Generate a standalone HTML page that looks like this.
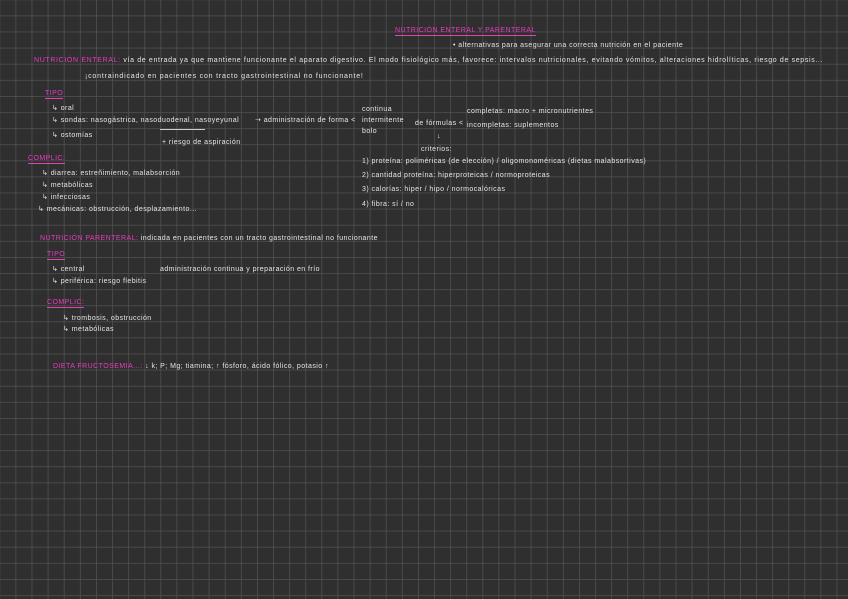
<!DOCTYPE html>
<html><head><meta charset="utf-8"><style>
html,body{margin:0;padding:0;}
body{width:848px;height:599px;background:#2f2f2f;position:relative;overflow:hidden;font-family:"Liberation Sans",sans-serif;}
svg.g{position:absolute;left:0;top:0}
.t{position:absolute;color:#e6e6e6;font-size:7px;white-space:nowrap;letter-spacing:0.45px;line-height:8px;}
.p{color:#e83cc0;}
.u{border-bottom:1px solid #e83cc0;}
</style></head><body>
<svg class="g" width="848" height="599"><defs><pattern id="gr" x="15.5" y="15.5" width="16.1" height="16.1" patternUnits="userSpaceOnUse"><path d="M0 0H16.1M0 0V16.1" stroke="#525252" stroke-width="1.5" fill="none"/></pattern></defs><rect width="848" height="599" fill="url(#gr)"/></svg>

<div class="t p u" style="left:395px;top:27px;">NUTRICIÓN ENTERAL Y PARENTERAL</div>
<div class="t" style="left:453px;top:42px;">• alternativas para asegurar una correcta nutrición en el paciente</div>
<div class="t" style="left:34px;top:57px;letter-spacing:0.65px;"><span class="p">NUTRICIÓN ENTERAL:</span> vía de entrada ya que mantiene funcionante el aparato digestivo. El modo fisiológico más, favorece: intervalos nutricionales, evitando vómitos, alteraciones hidrolíticas, riesgo de sepsis...</div>
<div class="t" style="left:85px;top:73px;letter-spacing:0.8px;">¡contraindicado en pacientes con tracto gastrointestinal no funcionante!</div>
<div class="t p u" style="left:45px;top:90px;">TIPO</div>
<div class="t" style="left:52px;top:105px;">↳ oral</div>
<div class="t" style="left:52px;top:117px;">↳ sondas: nasogástrica, nasoduodenal, nasoyeyunal</div>
<div style="position:absolute;left:160px;top:129px;width:45px;height:1px;background:#ccc"></div>
<div class="t" style="left:162px;top:139px;">+ riesgo de aspiración</div>
<div class="t" style="left:52px;top:132px;">↳ ostomías</div>
<div class="t" style="left:255px;top:117px;">➝ administración de forma &lt;</div>
<div class="t" style="left:362px;top:106px;">continua</div>
<div class="t" style="left:362px;top:117px;">intermitente</div>
<div class="t" style="left:362px;top:128px;">bolo</div>
<div class="t" style="left:415px;top:120px;">de fórmulas &lt;</div>
<div class="t" style="left:467px;top:108px;">completas: macro + micronutrientes</div>
<div class="t" style="left:467px;top:122px;">incompletas: suplementos</div>
<div class="t" style="left:437px;top:133px;">↓</div>
<div class="t" style="left:421px;top:146px;">criterios:</div>
<div class="t" style="left:362px;top:158px;">1) proteína: poliméricas (de elección) / oligomonoméricas (dietas malabsortivas)</div>
<div class="t" style="left:362px;top:172px;">2) cantidad proteína: hiperproteicas / normoproteicas</div>
<div class="t" style="left:362px;top:186px;">3) calorías: hiper / hipo / normocalóricas</div>
<div class="t" style="left:362px;top:201px;">4) fibra: sí / no</div>
<div class="t p u" style="left:28px;top:155px;">COMPLIC:</div>
<div class="t" style="left:42px;top:170px;">↳ diarrea: estreñimiento, malabsorción</div>
<div class="t" style="left:42px;top:182px;">↳ metabólicas</div>
<div class="t" style="left:42px;top:194px;">↳ infecciosas</div>
<div class="t" style="left:38px;top:206px;">↳ mecánicas: obstrucción, desplazamiento...</div>
<div class="t" style="left:40px;top:235px;"><span class="p">NUTRICIÓN PARENTERAL:</span> indicada en pacientes con un tracto gastrointestinal no funcionante</div>
<div class="t p u" style="left:47px;top:251px;">TIPO</div>
<div class="t" style="left:52px;top:266px;">↳ central</div>
<div class="t" style="left:52px;top:278px;">↳ periférica: riesgo flebitis</div>
<div class="t" style="left:160px;top:266px;">administración continua y preparación en frío</div>
<div class="t p u" style="left:47px;top:299px;">COMPLIC:</div>
<div class="t" style="left:63px;top:315px;">↳ trombosis, obstrucción</div>
<div class="t" style="left:63px;top:326px;">↳ metabólicas</div>
<div class="t" style="left:53px;top:363px;"><span class="p">DIETA FRUCTOSEMIA...:</span> ↓ k; P; Mg; tiamina; ↑ fósforo, ácido fólico, potasio ↑</div>
</body></html>
